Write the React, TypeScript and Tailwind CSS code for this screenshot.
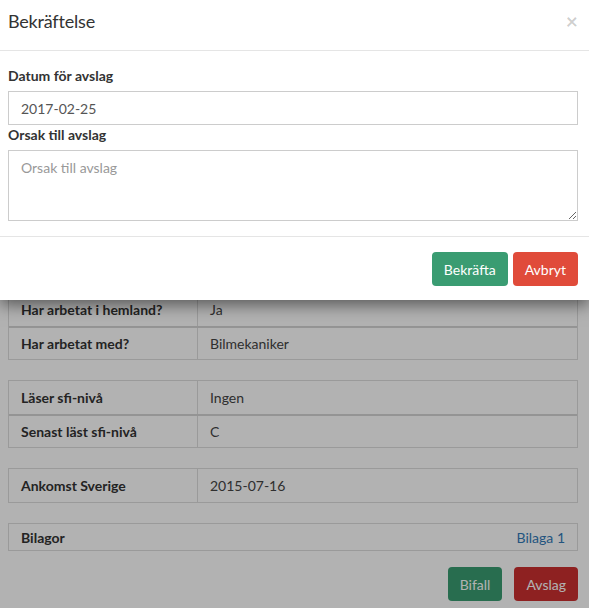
import React from "react";

const font = { fontFamily: "Lato, 'Noto Sans', sans-serif" };

function Row({ label, value, sep }: { label: string; value: string; sep?: boolean }) {
  return (
    <div className={`flex h-[33px] ${sep ? "border-t-2 border-[#d4d4d4]" : ""}`}>
      <div className="w-[189px] flex items-center pl-3 font-bold text-[#333] border-r border-[#ddd]">{label}</div>
      <div className="flex-1 flex items-center pl-3 text-[#444]">{value}</div>
    </div>
  );
}

export default function App() {
  return (
    <div className="relative w-[589px] h-[608px] overflow-hidden bg-white text-[14px]" style={font}>
      {/* background page */}
      <div className="pl-2 pr-[11px] pt-[292px] flex flex-col">
        <div className="border border-[#ddd]">
          <Row label="Har arbetat i hemland?" value="Ja" />
          <Row label="Har arbetat med?" value="Bilmekaniker" sep />
        </div>
        <div className="border border-[#ddd] mt-5">
          <Row label="Läser sfi-nivå" value="Ingen" />
          <Row label="Senast läst sfi-nivå" value="C" sep />
        </div>
        <div className="border border-[#ddd] mt-5">
          <Row label="Ankomst Sverige" value="2015-07-16" />
        </div>
        <div className="border border-[#ddd] mt-5 h-[28px] flex flex-col justify-center">
          <div className="flex items-center">
            <div className="flex-1 pl-3 font-bold text-[#333]">Bilagor</div>
            <div className="pr-3 text-[#337ab7]">Bilaga 1</div>
          </div>
        </div>
        <div className="flex justify-end gap-[12px] mt-4">
          <button className="h-[34px] px-3 rounded-[4px] bg-[#3a9c72] text-white">Bifall</button>
          <button className="h-[34px] px-3 rounded-[4px] bg-[#cc3030] text-white">Avslag</button>
        </div>
      </div>

      {/* backdrop */}
      <div className="absolute inset-0 bg-black/30" />

      {/* modal */}
      <div className="absolute top-0 left-0 w-[589px] bg-white shadow-[0_5px_15px_rgba(0,0,0,0.5)]">
        <div className="h-[51px] border-b border-[#e5e5e5] flex items-start justify-between pl-2 pr-[11px] pt-[9px]">
          <h4 className="text-[18px] leading-[24px] text-[#333] tracking-[-0.2px]">Bekräftelse</h4>
          <span className="text-[21px] leading-[21px] font-bold text-black/20 mt-[1px]">×</span>
        </div>
        <div className="pl-2 pr-[11px] pt-[15px] pb-[15px] flex flex-col">
          <label className="font-bold text-[#333] leading-[20px] mb-[5px]">Datum för avslag</label>
          <input
            readOnly
            value="2017-02-25"
            className="h-[34px] border border-[#ccc] px-3 text-[#555] outline-none"
            style={font}
          />
          <label className="font-bold text-[#333] leading-[20px] mb-[5px]">Orsak till avslag</label>
          <textarea
            placeholder="Orsak till avslag"
            className="h-[71px] border border-[#ccc] px-3 py-[6px] text-[#555] placeholder:text-[#999] outline-none block"
            style={font}
          />
        </div>
        <div className="border-t border-[#e5e5e5] pl-2 pr-[11px] pt-[15px] pb-[14px] flex justify-end gap-[5px]">
          <button className="h-[34px] px-3 rounded-[4px] bg-[#3a9c72] text-white">Bekräfta</button>
          <button className="h-[34px] px-3 rounded-[4px] bg-[#e04b3a] text-white">Avbryt</button>
        </div>
      </div>
    </div>
  );
}
